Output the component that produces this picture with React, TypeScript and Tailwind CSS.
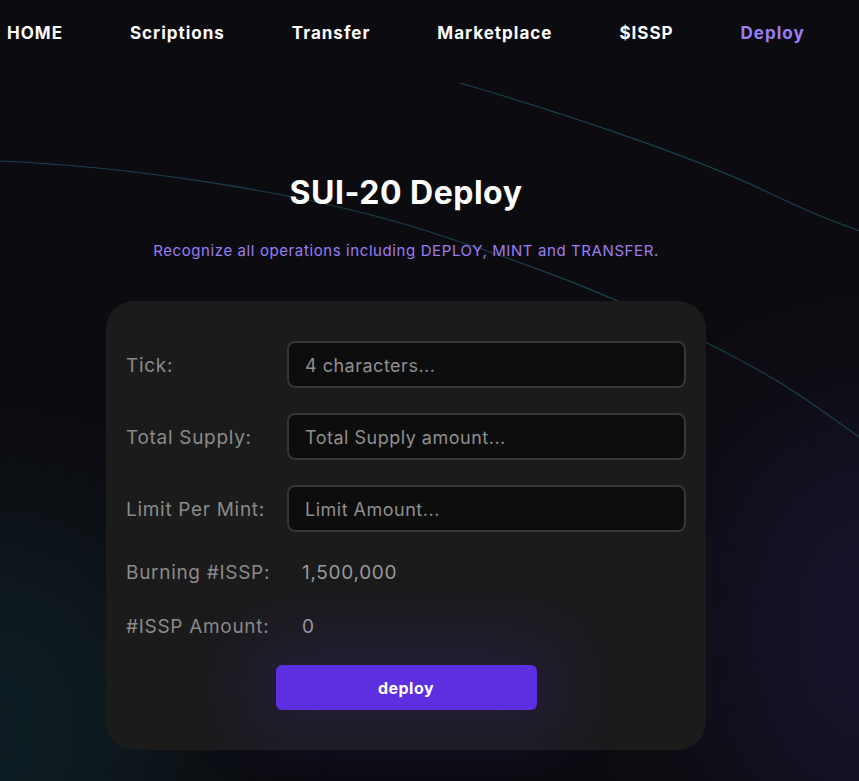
import React from 'react';

const navItems = ['HOME', 'Scriptions', 'Transfer', 'Marketplace', '$ISSP', 'Deploy'];

const Field: React.FC<{ label: string; placeholder: string }> = ({ label, placeholder }) => (
  <div className="flex items-center">
    <label className="w-[161px] shrink-0 pt-[3px] text-[19px] tracking-[0.7px] text-[#8a8a8a]">{label}</label>
    <input
      placeholder={placeholder}
      className="h-[47px] flex-1 rounded-lg border-2 border-[#363636] bg-[#0d0d0d] px-4 pt-[2px] text-[18px] tracking-[0.5px] text-[#cfcfcf] outline-none placeholder:text-[#8f8f8f]"
    />
  </div>
);

const InfoRow: React.FC<{ label: string; value: string }> = ({ label, value }) => (
  <div className="flex h-[29px] items-center pt-[4px] text-[19px] tracking-[0.7px] text-[#8a8a8a]">
    <span className="w-[176px] shrink-0">{label}</span>
    <span className="text-[#9a9a9a]">{value}</span>
  </div>
);

export default function App() {
  return (
    <div className="relative min-h-screen overflow-hidden bg-[#0c0c10] font-['Inter','Liberation_Sans',sans-serif] text-white">
      {/* background glows and curves */}
      <div className="pointer-events-none absolute -left-[160px] top-[520px] h-[420px] w-[320px] rounded-full bg-[#0f2830] opacity-60 blur-[80px]" />
      <div className="pointer-events-none absolute -right-[150px] top-[420px] h-[420px] w-[280px] rounded-full bg-[#231a48] opacity-50 blur-[80px]" />
      <svg className="pointer-events-none absolute inset-0" width="859" height="781" fill="none">
        <path d="M0 161 C 120 166, 300 190, 430 232 S 620 300, 707 343 S 820 410, 880 452" stroke="#1b4656" strokeWidth="1.2" opacity="0.9" />
        <path d="M460 83 C 580 118, 700 160, 763 190 S 840 224, 880 238" stroke="#1b4656" strokeWidth="1.2" opacity="0.9" />
      </svg>

      <div className="relative w-[812px]">
        <nav className="flex h-[68px] items-center gap-[67px] pl-[7px] text-[17px] font-bold tracking-[1px]">
          {navItems.map((item) => (
            <a key={item} href="#" className={item === 'Deploy' ? 'text-[#9b7ef3]' : 'text-white'}>
              {item}
            </a>
          ))}
        </nav>

        <div className="flex flex-col items-center pt-[105px] pb-8">
          <h1 className="text-[32px] font-bold leading-[40px] tracking-[0.5px]">SUI-20 Deploy</h1>
          <p className="mt-[27px] text-[15px] leading-[22px] tracking-[0.6px] text-[#9b7cf4]">
            Recognize all operations including DEPLOY, MINT and TRANSFER.
          </p>

          <div className="mt-[39px] flex w-[600px] flex-col gap-[25px] rounded-[28px] bg-[#1b1b1b] px-5 py-10">
            <Field label="Tick:" placeholder="4 characters..." />
            <Field label="Total Supply:" placeholder="Total Supply amount..." />
            <Field label="Limit Per Mint:" placeholder="Limit Amount..." />
            <InfoRow label="Burning #ISSP:" value="1,500,000" />
            <InfoRow label="#ISSP Amount:" value="0" />
            <div className="flex justify-center">
              <button className="h-[45px] w-[261px] rounded-md bg-[#5c2fe0] text-[16px] font-bold tracking-[0.5px] text-white shadow-[0_0_70px_30px_rgba(92,47,224,0.14)]">
                deploy
              </button>
            </div>
          </div>
        </div>
      </div>
    </div>
  );
}
